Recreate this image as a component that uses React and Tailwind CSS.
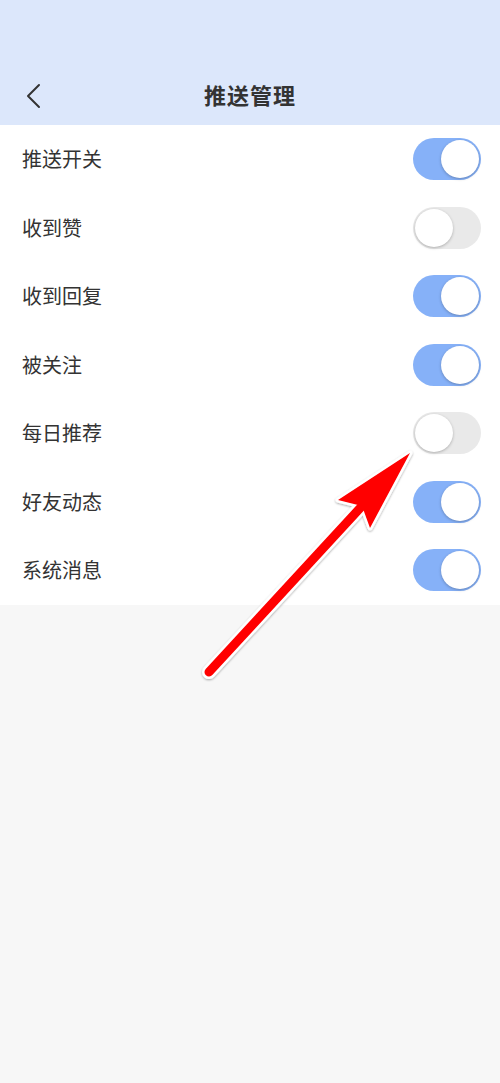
import { useState } from 'react'

const items = [
  { label: '推送开关', on: true },
  { label: '收到赞', on: false },
  { label: '收到回复', on: true },
  { label: '被关注', on: true },
  { label: '每日推荐', on: false },
  { label: '好友动态', on: true },
  { label: '系统消息', on: true },
]

const Toggle = ({ on, onClick }) => (
  <button
    onClick={onClick}
    className={`relative w-[68px] h-[42px] rounded-full flex items-center px-[2px] ${
      on ? 'bg-[#86b1f8] justify-end' : 'bg-[#e9e9e9] justify-start'
    }`}
  >
    <span className="w-[38px] h-[38px] rounded-full bg-white shadow-[0_1px_3px_rgba(0,0,0,0.25)]" />
  </button>
)

export default function App() {
  const [list, setList] = useState(items)

  const flip = (i) => setList(list.map((it, j) => (j === i ? { ...it, on: !it.on } : it)))

  return (
    <div
      className="relative w-[500px] h-[1083px] bg-[#f7f7f7] overflow-hidden"
      style={{ fontFamily: '"Noto Sans CJK SC", "Noto Sans", sans-serif' }}
    >
      {/* Header */}
      <div className="h-[125px] bg-[#dce7fb] flex items-end">
        <div className="relative w-full h-[62px] flex items-center justify-center">
          <svg className="absolute left-[24px] top-[20px]" width="18" height="26" viewBox="0 0 18 26">
            <path d="M15 2 L4 13 L15 24" fill="none" stroke="#333" strokeWidth="2" strokeLinecap="round" strokeLinejoin="round" />
          </svg>
          <h1 className="text-[22px] font-bold text-[#333] tracking-[1px]">推送管理</h1>
        </div>
      </div>

      {/* List */}
      <div className="bg-white">
        {list.map((it, i) => (
          <div key={it.label} className="h-[68.5px] flex items-center justify-between pl-[22px] pr-[19px]">
            <span className="text-[20px] text-[#333]">{it.label}</span>
            <Toggle on={it.on} onClick={() => flip(i)} />
          </div>
        ))}
      </div>

      {/* Annotation arrow */}
      <svg className="absolute left-0 top-0 pointer-events-none" width="500" height="1083">
        <defs>
          <filter id="sh" x="-10%" y="-10%" width="120%" height="120%">
            <feDropShadow dx="0" dy="1" stdDeviation="1.2" floodColor="#000" floodOpacity="0.35" />
          </filter>
        </defs>
        <g filter="url(#sh)">
          <line x1="209" y1="672" x2="360" y2="508" stroke="#fff" strokeWidth="14" strokeLinecap="round" />
          <polygon points="410,453 338,500 362,506 370,528" fill="#fff" stroke="#fff" strokeWidth="5" strokeLinejoin="round" />
          <line x1="209" y1="672" x2="362" y2="506" stroke="#ff0000" strokeWidth="9" strokeLinecap="round" />
          <polygon points="410,453 338,500 362,506 370,528" fill="#ff0000" />
        </g>
      </svg>
    </div>
  )
}
